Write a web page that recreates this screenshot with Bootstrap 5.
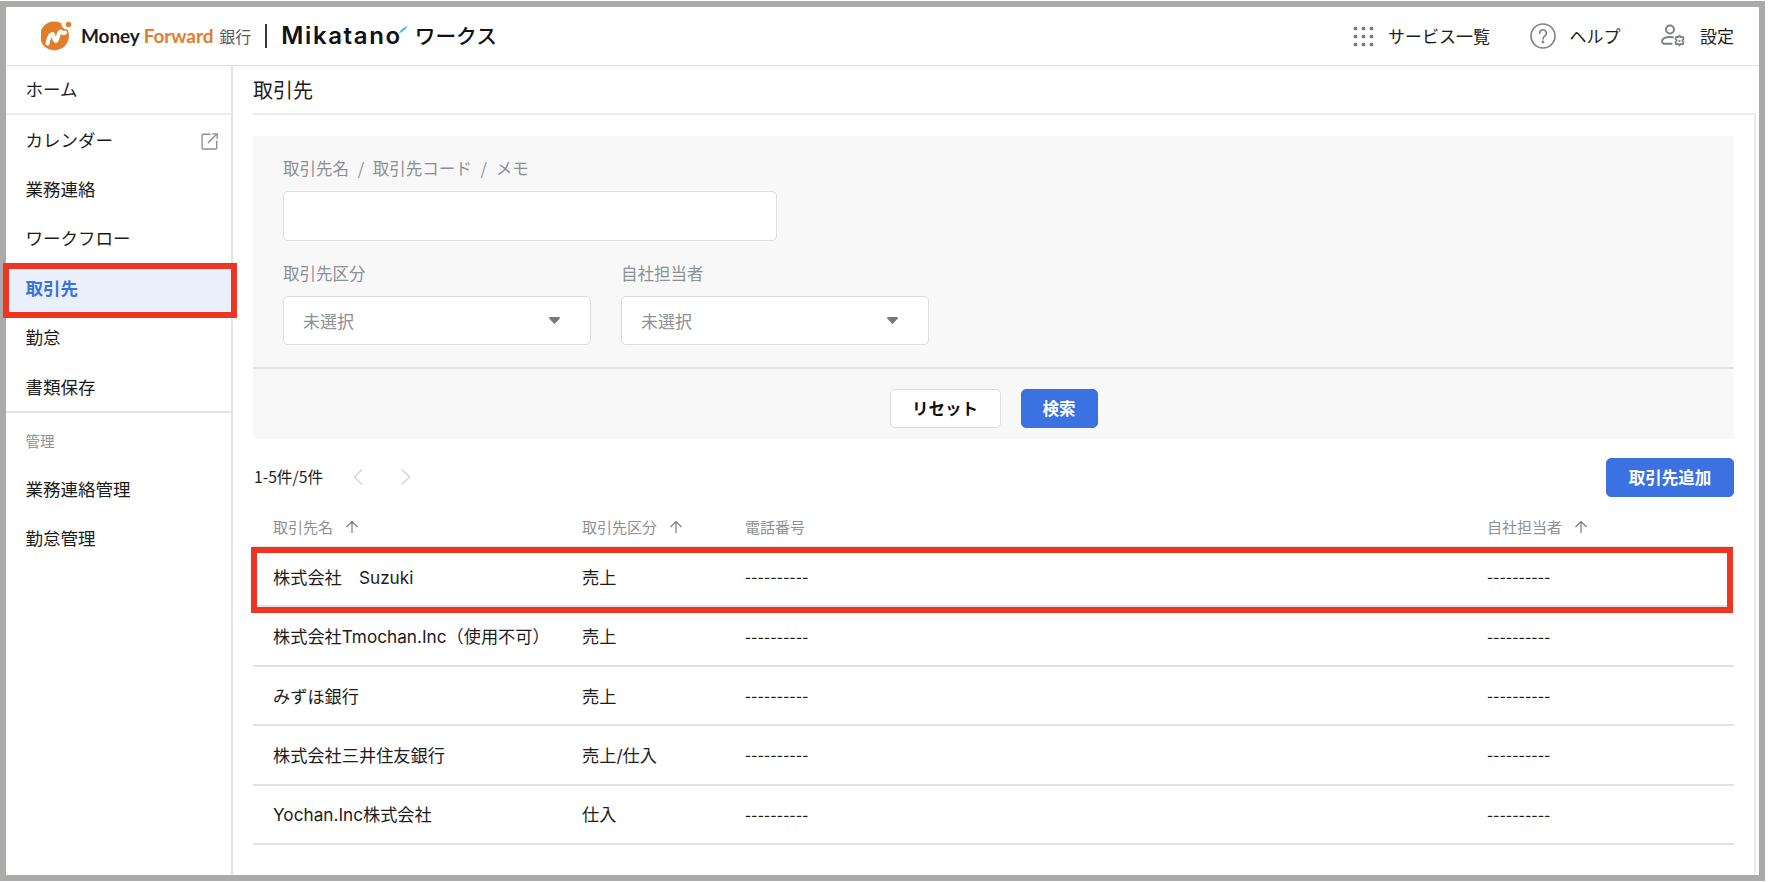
<!DOCTYPE html>
<html lang="ja">
<head>
    <meta charset="UTF-8">
    <meta name="viewport" content="width=device-width, initial-scale=1.0">
    <title>取引先 - Mikatano ワークス</title>
    <link href="https://cdn.jsdelivr.net/npm/bootstrap@5.3.0/dist/css/bootstrap.min.css" rel="stylesheet">
    <style>
        html, body { height: 100%; }
        body {
            background-color: #fff;
            color: #1c1c1c;
            font-family: "Noto Sans CJK JP", "Noto Sans", sans-serif;
            font-size: 17px;
            overflow: hidden;
        }
        .app-frame {
            width: 1765px;
            height: 880px;
            margin-top: 1px;
            border: 6px solid #abaaa8;
            display: flex;
            flex-direction: column;
            background-color: #fff;
        }
        /* header */
        .app-header {
            height: 59px;
            flex: none;
            padding: 0 25px 0 35px;
            border-bottom: 1px solid #dfdfdf;
        }
        .mf-word { font-family: "Lato", sans-serif; font-weight: 700; font-size: 19px; margin-left: 8px; letter-spacing: -.1px; }
        .mf-orange { color: #e27d2b; }
        .bank-word { color: #55595c; font-size: 16px; margin-left: 6px; }
        .logo-sep { width: 2px; height: 24px; background-color: #3a3a3a; margin: 0 14px; }
        .mika-word { font-family: "Inter", sans-serif; font-weight: 600; font-size: 24px; letter-spacing: 1.6px; color: #111; line-height: 1; }
        .mika-tick { margin: 0 0 14px -3px; }
        .works-word { font-size: 20.7px; font-weight: 500; margin-left: 7px; color: #111; }
        .head-link { font-size: 17px; gap: 14px; }
        .head-link + .head-link { margin-left: 39.5px; }
        /* sidebar */
        .side-col {
            width: 227px;
            flex: none;
            border-right: 2px solid #e3e3e3;
        }
        .side-item {
            height: 49.4px;
            padding: 0 18px 0 19.5px;
            font-size: 17.5px;
            color: #1c1c1c;
            text-decoration: none;
            position: relative;
        }
        .side-home { height: 49px; border-bottom: 2px solid #ececec; }
        .side-link-icon { margin: 3px -5px 0 0; }
        .side-active { background-color: #e9f0fc; color: #3b71e0; font-weight: 700; }
        .side-sep { border-top: 2px solid #e3e3e3; }
        .side-group { height: 53px; padding: 5px 19.5px 0; font-size: 14.5px; color: #8d9093; }
        .mark-box {
            position: absolute;
            border: 6px solid #ee3524;
            pointer-events: none;
        }
        .mark-side { left: -3px; right: -6px; top: 0; bottom: -5px; }
        .mark-row { left: -2px; top: -1px; bottom: -8px; }
        /* main */
        .main-col { padding: 0 3px 0 20px; min-width: 0; }
        .page-title {
            height: 49px;
            font-size: 20px;
            border-bottom: 2px solid #ececec;
        }
        .main-body { border-right: 2px solid #ececec; padding-right: 20px; padding-top: 21px; flex: 1; }
        .filter-box { background-color: #f8f8f8; height: 303px; }
        .filter-fields { padding: 20px 30px 0; height: 233px; border-bottom: 2px solid #e2e2e2; }
        .field-label { font-size: 16.5px; color: #8d9093; margin-bottom: 11px; line-height: 24px; }
        .label-wide { word-spacing: 5px; }
        .pick-row { margin-top: 20px; gap: 30px; }
        .text-field { width: 494px; height: 50px; border-color: #dcdcdc; border-radius: 5px; }
        .pick-field {
            width: 308px;
            height: 49px;
            border-color: #dcdcdc;
            border-radius: 5px;
            color: #8d9093;
            font-size: 17px;
            padding-left: 19px;
            background-size: 11px 7px;
            background-position: right 30px center;
            background-image: url("data:image/svg+xml,%3csvg xmlns='http://www.w3.org/2000/svg' viewBox='0 0 13 8'%3e%3cpath fill='%23777b80' d='M1 0h11a1 1 0 0 1 .8 1.6l-5.5 6a1 1 0 0 1-1.6 0l-5.5-6A1 1 0 0 1 1 0z'/%3e%3c/svg%3e");
        }
        .filter-actions { height: 70px; gap: 20px; padding-top: 8px; }
        .act-btn { height: 39px; font-size: 16.5px; font-weight: 700; border-radius: 5px; padding: 0; line-height: 1; }
        .act-reset { width: 111px; background-color: #fff; border: 1px solid #dcdcdc; color: #111; }
        .act-search { width: 77px; }
        .act-add { width: 128px; }
        .btn-primary { --bs-btn-bg: #3b71e0; --bs-btn-border-color: #3b71e0; }
        .pager-row { height: 40px; margin-top: 18px; }
        .pager-count { font-size: 15.7px; margin-left: 1px; }
        .pager-nav { gap: 36px; margin-left: 29px; }
        .list-table { table-layout: fixed; width: 100%; margin: 10px 0 0; font-size: 17.2px; font-family: "Inter", "Noto Sans CJK JP", sans-serif; }
        .list-table th, .list-table td { padding: 0 0 0 20px; vertical-align: middle; border-bottom: 2px solid #e3e3e3; }
        .list-table th { height: 40px; padding-top: 3px; font-size: 15px; font-weight: 400; color: #8d9093; }
        .list-table td { height: 59.4px; padding-top: 2px; color: #1c1c1c; }
        .list-table .row-marked { position: relative; }
        .list-table td.cell-dash { font-family: "Noto Sans CJK JP", sans-serif; letter-spacing: .4px; padding-top: 0; padding-bottom: 1px; }
        .sort-arrow { margin-left: 12px; vertical-align: -1px; }
    </style>
</head>
<body>
    <div class="app-frame">
        <header class="app-header d-flex align-items-center justify-content-between">
            <div class="d-flex align-items-center">
                <svg width="32" height="32" viewBox="0 0 32 32">
                    <path fill="#e27d2b" d="M26.5 9.6A14.5 14.5 0 1 1 20.4 3.2 6 6 0 0 0 26.5 9.6z"/>
                    <circle cx="27.5" cy="4.5" r="2.8" fill="#e27d2b"/>
                    <path fill="none" stroke="#fff" stroke-width="4" stroke-linecap="round" stroke-linejoin="round" d="M6.5 23.5c1-5 3-9.500 4.800-9.500 2.200 0 1.200 7 3.400 7 2.300 0 2.300-9.500 4.800-9.500 1.500 0 1.500 3 4.500 1"/>
                </svg>
                <span class="mf-word">Money <span class="mf-orange">Forward</span></span>
                <span class="bank-word">銀行</span>
                <span class="logo-sep"></span>
                <span class="mika-word">Mikatano</span>
                <svg class="mika-tick" width="9" height="7" viewBox="0 0 9 7"><path fill="#45b8ea" d="M0 7C2 3.500 5 1 9 0 7.500 2.500 4.500 5 1 7z"/></svg>
                <span class="works-word">ワークス</span>
            </div>
            <div class="d-flex align-items-center">
                <a class="head-link d-flex align-items-center text-decoration-none text-reset" href="#">
                    <svg width="21" height="21" viewBox="0 0 21 21" fill="#7d8185">
                        <circle cx="2.5" cy="2.5" r="2"/><circle cx="10.500" cy="2.500" r="2"/><circle cx="18.500" cy="2.500" r="2"/>
                        <circle cx="2.5" cy="10.500" r="2"/><circle cx="10.500" cy="10.500" r="2"/><circle cx="18.500" cy="10.500" r="2"/>
                        <circle cx="2.5" cy="18.500" r="2"/><circle cx="10.500" cy="18.500" r="2"/><circle cx="18.500" cy="18.500" r="2"/>
                    </svg>
                    サービス一覧
                </a>
                <a class="head-link d-flex align-items-center text-decoration-none text-reset" href="#">
                    <svg width="26" height="26" viewBox="0 0 26 26" fill="none" stroke="#7d8185" stroke-width="1.6">
                        <circle cx="13" cy="13" r="12"/>
                        <path stroke-linecap="round" d="M9.600 10.200a3.400 3.400 0 1 1 5.300 2.800c-1.200.8-1.900 1.500-1.900 2.900"/>
                        <circle cx="13" cy="19" r=".6" fill="#7d8185"/>
                    </svg>
                    ヘルプ
                </a>
                <a class="head-link d-flex align-items-center text-decoration-none text-reset" href="#">
                    <svg width="26" height="24" viewBox="0 0 26 24" fill="none" stroke="#7d8185" stroke-width="2">
                        <circle cx="10" cy="5.500" r="4"/>
                        <path stroke-linecap="round" stroke-linejoin="round" d="M13 13.200c-1-.2-2-.3-3-.3-4.500 0-8 1.800-8 4.300 0 1 .6 1.800 1.600 2.600h8"/>
                        <path stroke-width="1.700" stroke-linejoin="round" d="m19.500 11.500 1.300 1.600 2.100-.3.700 2-1.400 1.700 1.400 1.700-.7 2-2.100-.3-1.300 1.600-1.300-1.600-2.100.3-.7-2 1.400-1.700-1.400-1.700.7-2 2.100.3z"/>
                        <circle cx="19.500" cy="17" r="1.100" fill="#7d8185" stroke="none"/>
                    </svg>
                    設定
                </a>
            </div>
        </header>

        <div class="d-flex flex-grow-1" style="min-height:0">
            <nav class="side-col">
                <a class="side-item side-home d-flex align-items-center" href="#">ホーム</a>
                <a class="side-item d-flex align-items-center justify-content-between" href="#">
                    カレンダー
                    <svg class="side-link-icon" width="17" height="17" viewBox="0 0 16 16" fill="none" stroke="#8d9093" stroke-width="1.3">
                        <path d="M9 1.200H2a1 1 0 0 0-1 1V14a1 1 0 0 0 1 1h11.800a1 1 0 0 0 1-1V7"/>
                        <path d="M6.500 9.500 15 1M10.500 .8h4.700v4.700"/>
                    </svg>
                </a>
                <a class="side-item d-flex align-items-center" href="#">業務連絡</a>
                <a class="side-item d-flex align-items-center" href="#">ワークフロー</a>
                <a class="side-item side-active d-flex align-items-center" href="#">取引先<span class="mark-box mark-side"></span></a>
                <a class="side-item d-flex align-items-center" href="#">勤怠</a>
                <a class="side-item d-flex align-items-center" href="#">書類保存</a>
                <div class="side-sep side-group d-flex align-items-center">管理</div>
                <a class="side-item d-flex align-items-center" href="#">業務連絡管理</a>
                <a class="side-item d-flex align-items-center" href="#">勤怠管理</a>
            </nav>

            <main class="main-col flex-grow-1 d-flex flex-column">
                <div class="page-title d-flex align-items-center">取引先</div>
                <div class="main-body">
                    <div class="filter-box">
                        <div class="filter-fields">
                            <div class="field-label label-wide">取引先名 / 取引先コード / メモ</div>
                            <input type="text" class="form-control text-field">
                            <div class="d-flex pick-row">
                                <div>
                                    <div class="field-label">取引先区分</div>
                                    <select class="form-select pick-field"><option>未選択</option></select>
                                </div>
                                <div>
                                    <div class="field-label">自社担当者</div>
                                    <select class="form-select pick-field"><option>未選択</option></select>
                                </div>
                            </div>
                        </div>
                        <div class="filter-actions d-flex align-items-center justify-content-center">
                            <button type="button" class="btn act-btn act-reset">リセット</button>
                            <button type="button" class="btn btn-primary act-btn act-search">検索</button>
                        </div>
                    </div>

                    <div class="pager-row d-flex align-items-center justify-content-between">
                        <div class="d-flex align-items-center">
                            <span class="pager-count">1-5件/5件</span>
                            <div class="pager-nav d-flex align-items-center">
                                <svg width="12" height="18" viewBox="0 0 12 18" fill="none" stroke="#d5d7d9" stroke-width="1.6"><path d="M10 1.500 2.500 9l7.500 7.500"/></svg>
                                <svg width="12" height="18" viewBox="0 0 12 18" fill="none" stroke="#d5d7d9" stroke-width="1.6"><path d="M2 1.500 9.500 9 2 16.500"/></svg>
                            </div>
                        </div>
                        <button type="button" class="btn btn-primary act-btn act-add">取引先追加</button>
                    </div>

                    <table class="table list-table">
                        <colgroup>
                            <col style="width:309px"><col style="width:163px"><col style="width:742px"><col>
                        </colgroup>
                        <thead>
                            <tr>
                                <th>取引先名<svg class="sort-arrow" width="14" height="14" viewBox="0 0 14 14" fill="none" stroke="#777b80" stroke-width="1.2"><path d="M7 13V1.500M1.500 7 7 1.500 12.500 7"/></svg></th>
                                <th>取引先区分<svg class="sort-arrow" width="14" height="14" viewBox="0 0 14 14" fill="none" stroke="#777b80" stroke-width="1.2"><path d="M7 13V1.500M1.500 7 7 1.500 12.500 7"/></svg></th>
                                <th>電話番号</th>
                                <th>自社担当者<svg class="sort-arrow" width="14" height="14" viewBox="0 0 14 14" fill="none" stroke="#777b80" stroke-width="1.2"><path d="M7 13V1.500M1.500 7 7 1.500 12.500 7"/></svg></th>
                            </tr>
                        </thead>
                        <tbody id="partnerRows"></tbody>
                    </table>
                </div>
            </main>
        </div>
    </div>

    <script>
        var partners = [
            ["株式会社　Suzuki", "売上"],
            ["株式会社Tmochan.Inc（使用不可）", "売上"],
            ["みずほ銀行", "売上"],
            ["株式会社三井住友銀行", "売上/仕入"],
            ["Yochan.Inc株式会社", "仕入"]
        ];
        var rows = document.getElementById("partnerRows");
        partners.forEach(function (p, i) {
            var tr = document.createElement("tr");
            tr.innerHTML = "<td" + (i === 0 ? " class='row-marked'" : "") + ">" + p[0] + "</td><td>" + p[1] +
                "</td><td class='cell-dash'>----------</td><td class='cell-dash'>----------</td>";
            rows.appendChild(tr);
        });
        // marked row frame spans the whole table width
        var marked = document.querySelector(".row-marked");
        var box = document.createElement("span");
        box.className = "mark-box mark-row";
        box.style.width = rows.offsetWidth + 1 + "px";
        marked.appendChild(box);
    </script>
    <script src="https://cdn.jsdelivr.net/npm/bootstrap@5.3.0/dist/js/bootstrap.bundle.min.js"></script>
</body>
</html>
